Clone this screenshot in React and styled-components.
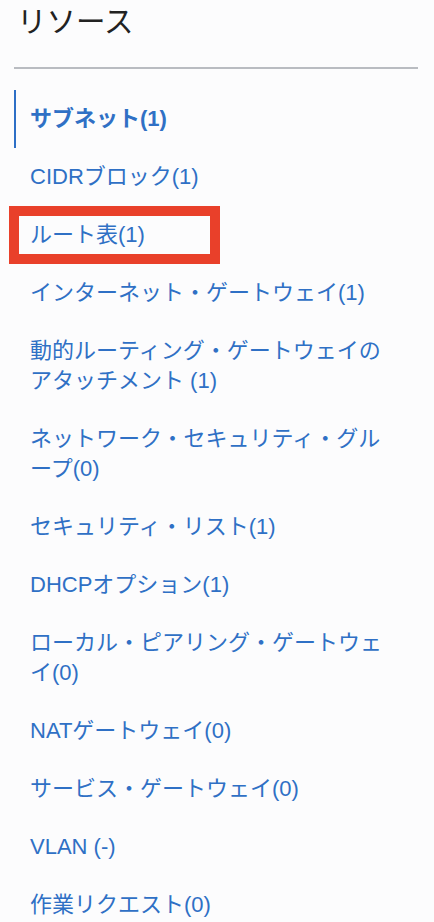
import styled, { createGlobalStyle } from "styled-components";

const GlobalStyle = createGlobalStyle`
  html, body {
    margin: 0;
    padding: 0;
    background: #fcfcfd;
  }
  body {
    font-family: "Liberation Sans", "Noto Sans CJK JP", sans-serif;
  }
`;

// each label is a list of lines, as the panel wraps them
const resources = [
  { lines: ["サブネット(1)"], active: true },
  { lines: ["CIDRブロック(1)"] },
  { lines: ["ルート表(1)"], marked: true },
  { lines: ["インターネット・ゲートウェイ(1)"] },
  { lines: ["動的ルーティング・ゲートウェイの", "アタッチメント (1)"] },
  { lines: ["ネットワーク・セキュリティ・グル", "ープ(0)"] },
  { lines: ["セキュリティ・リスト(1)"] },
  { lines: ["DHCPオプション(1)"] },
  { lines: ["ローカル・ピアリング・ゲートウェ", "イ(0)"] },
  { lines: ["NATゲートウェイ(0)"] },
  { lines: ["サービス・ゲートウェイ(0)"] },
  { lines: ["VLAN (-)"] },
  { lines: ["作業リクエスト(0)"] },
];

export default function App() {
  return (
    <>
      <GlobalStyle />
      <Panel>
        <Title>リソース</Title>
        <Divider />
        <List>
          {resources.map((r, i) => (
            <Item key={i} $active={r.active}>
              <Link href="#" $active={r.active}>
                {r.lines.map((line, j) => (
                  <Line key={j}>{line}</Line>
                ))}
              </Link>
              {r.marked && <Marker />}
            </Item>
          ))}
        </List>
      </Panel>
    </>
  );
}

const Panel = styled.div`
  padding: 0 16px 0 14px;
  width: 404px;
`;

const Title = styled.h2`
  margin: 0;
  padding: 4px 0 0 3px;
  height: 39px;
  font-size: 29.5px;
  line-height: 36px;
  font-weight: 400;
  color: #222;
`;

const Divider = styled.hr`
  margin: 24px 0 0;
  border: none;
  height: 2px;
  background: #b9bcc1;
`;

const List = styled.ul`
  list-style: none;
  margin: 21px 0 0;
  padding: 0;
`;

const Item = styled.li`
  position: relative;
  padding: 14px 0 14px 14px;
  border-left: 2px solid ${(p) => (p.$active ? "#2d6fc6" : "transparent")};
`;

const Link = styled.a`
  display: block;
  font-size: 22px;
  line-height: 30px;
  color: #2f70c5;
  text-decoration: none;
  font-weight: ${(p) => (p.$active ? 700 : 400)};
`;

const Line = styled.span`
  display: block;
  white-space: nowrap;
`;

const Marker = styled.span`
  position: absolute;
  top: 0;
  left: -7px;
  width: 211px;
  height: 58px;
  box-sizing: border-box;
  border: 10px solid #e9402a;
  pointer-events: none;
`;
